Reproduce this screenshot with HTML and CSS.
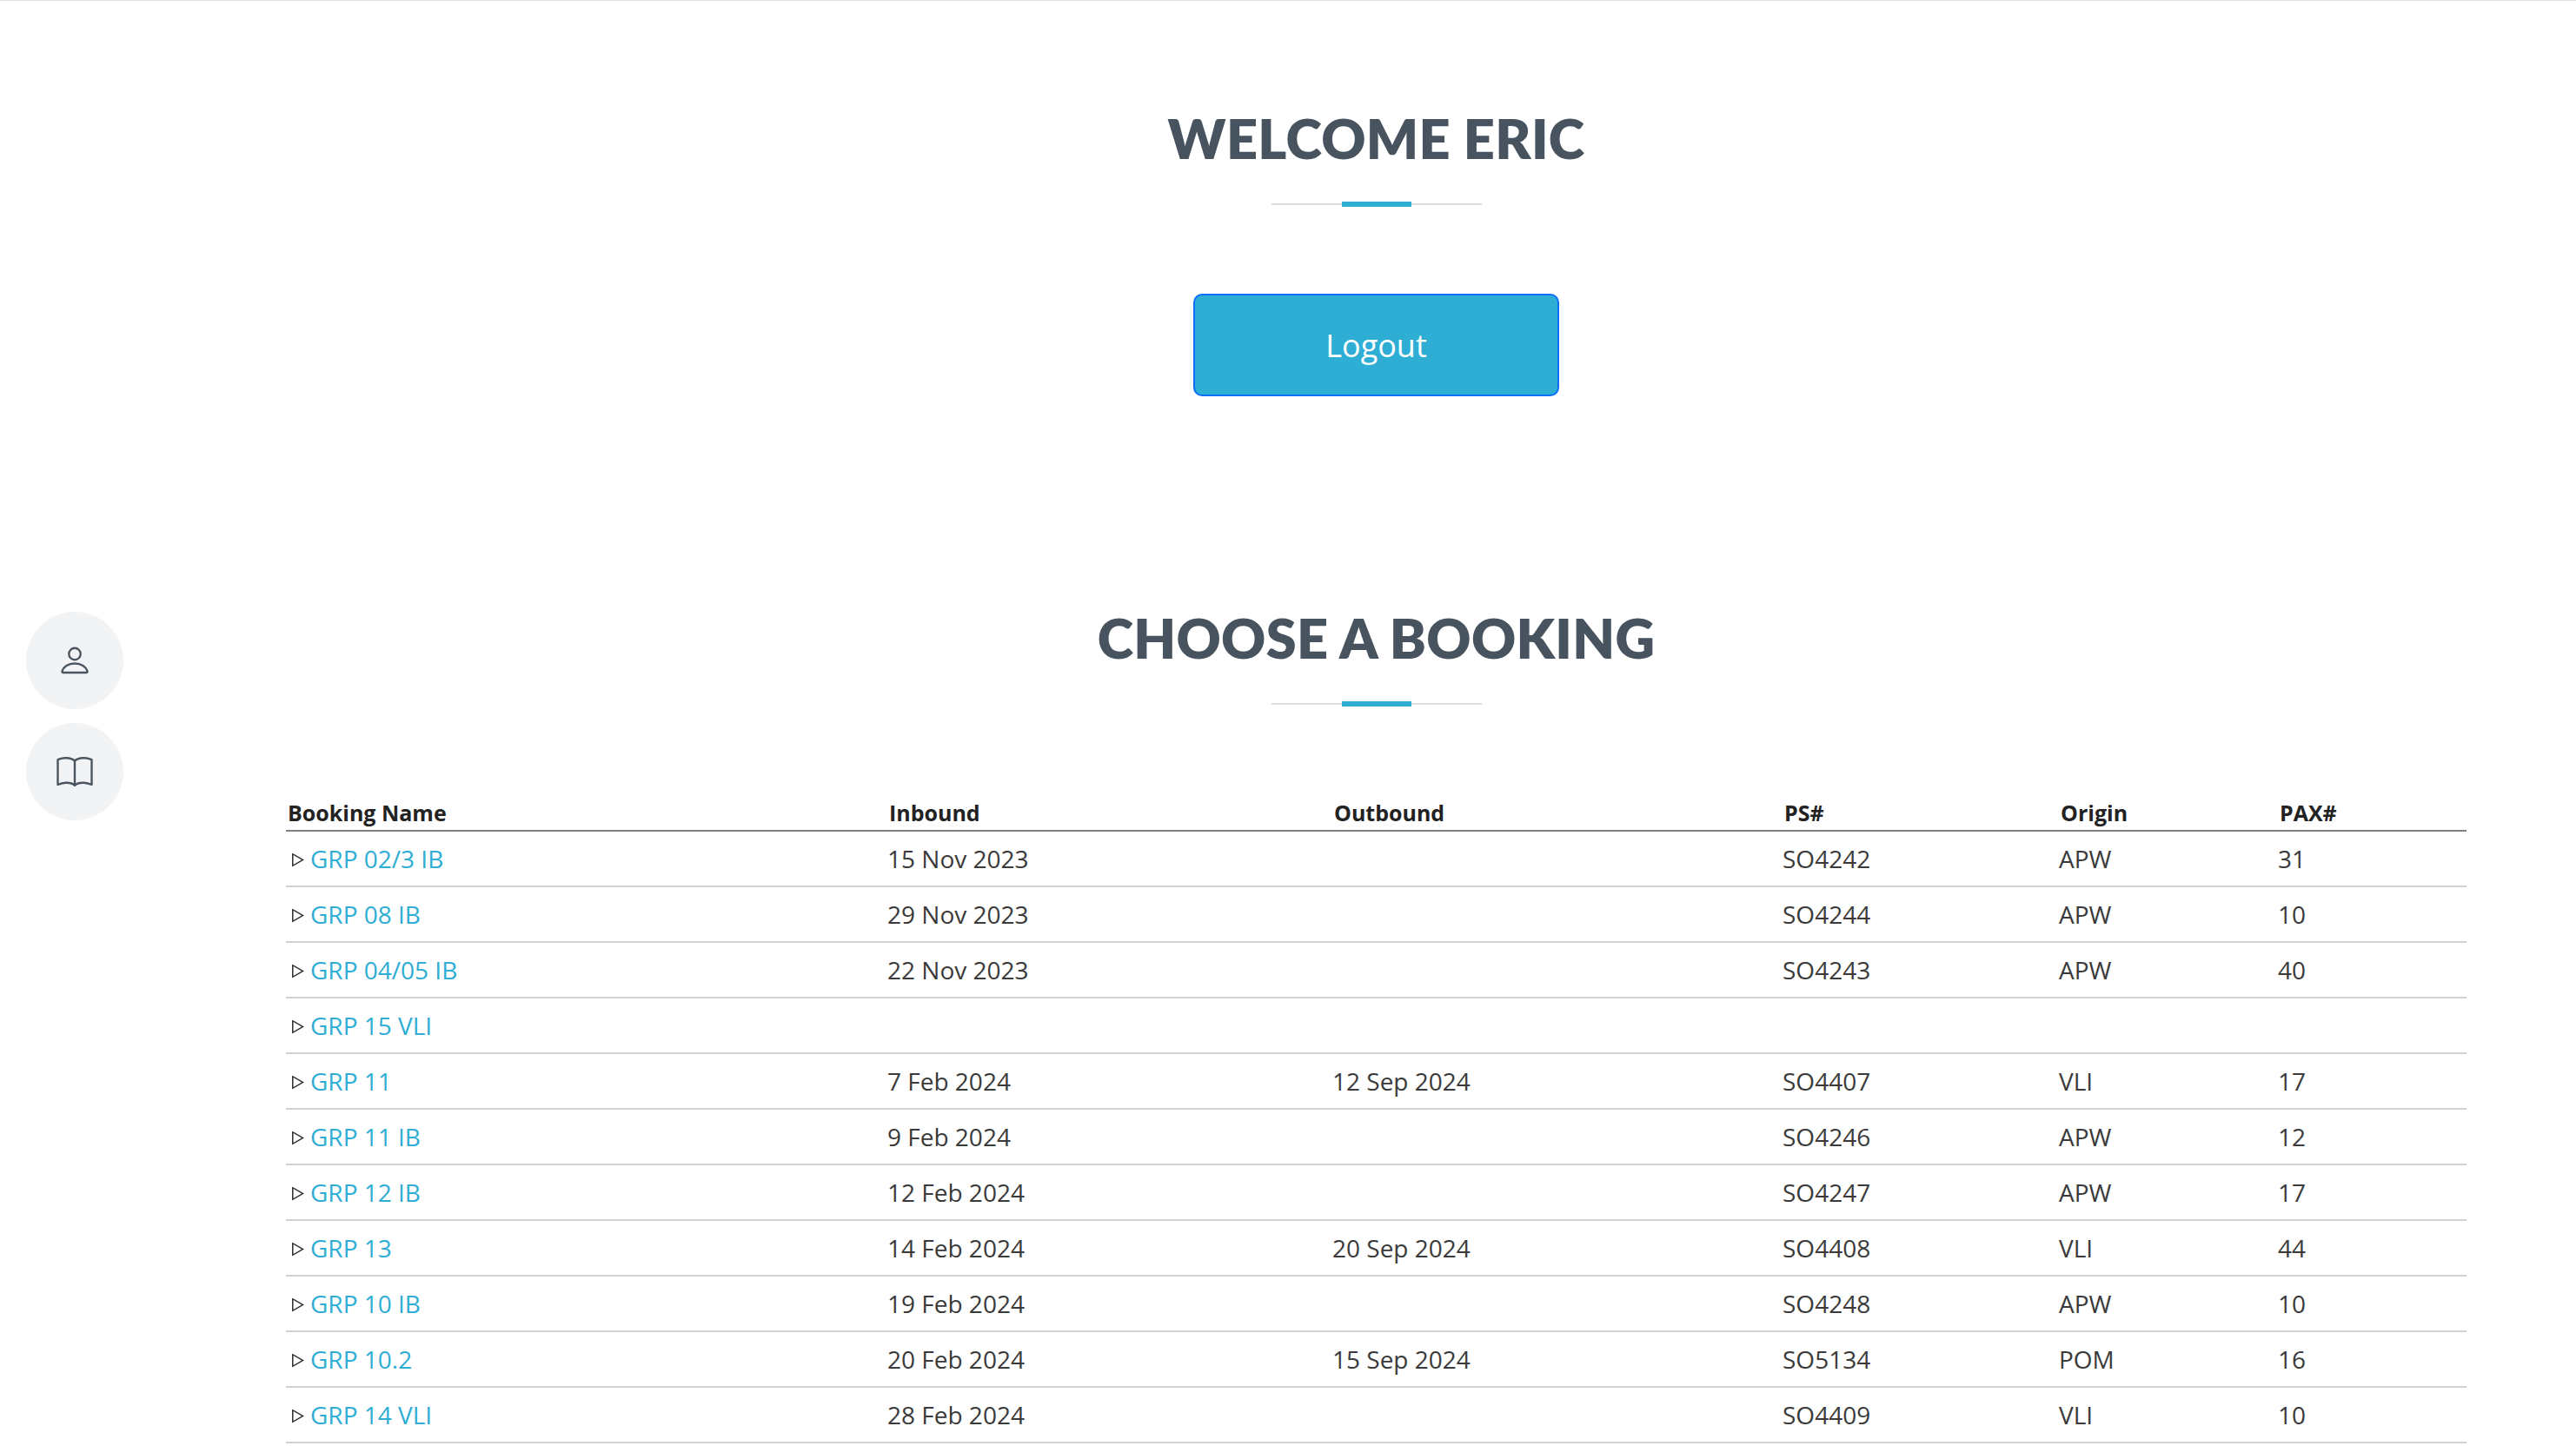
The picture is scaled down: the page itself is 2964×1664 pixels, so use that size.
FILE: index.html
```html
<!DOCTYPE html>
<html lang="en">
<head>
<meta charset="utf-8">
<title>Bookings</title>
<link rel="stylesheet" href="styles.css">
</head>
<body>
<aside class="side">
  <a class="side-btn"><svg class="ico" width="32" height="32" viewBox="0 0 32 32"><circle cx="16" cy="8.5" r="6.7"/><path d="M2.5 30c-1 0-1.200-.8-1-1.600C3 23.500 8.500 19.500 16 19.500s13 4 14.500 8.900c.2.800 0 1.600-1 1.600Z"/></svg></a>
  <a class="side-btn"><svg class="ico" width="42" height="34" viewBox="0 0 42 34"><path d="M21 4.500C18 1.800 13.500 1 9.500 1.300 6.500 1.500 3.500 2.300 1.500 3.200V32c3-1.300 6-2 9-2.200 4-.2 8 .5 10.500 3 2.500-2.500 6.500-3.200 10.500-3 3 .2 6 .9 9 2.200V3.200c-2-.9-5-1.700-8-1.900C28.500 1 24 1.800 21 4.500Zm0 0v28"/></svg></a>
</aside>
<main class="page">
  <section class="welcome">
    <h1 class="title">WELCOME ERIC</h1>
    <div class="rule"><span></span></div>
    <button class="logout">Logout</button>
  </section>
  <section class="bookings">
    <h1 class="title">CHOOSE A BOOKING</h1>
    <div class="rule"><span></span></div>
    <table class="table">
      <thead><tr><th class="c1">Booking Name</th><th class="c2">Inbound</th><th class="c3">Outbound</th><th class="c4">PS#</th><th class="c5">Origin</th><th>PAX#</th></tr></thead>
      <tbody>
        <tr><td><i class="tri"></i><a>GRP 02/3 IB</a></td><td>15 Nov 2023</td><td></td><td>SO4242</td><td>APW</td><td>31</td></tr>
        <tr><td><i class="tri"></i><a>GRP 08 IB</a></td><td>29 Nov 2023</td><td></td><td>SO4244</td><td>APW</td><td>10</td></tr>
        <tr><td><i class="tri"></i><a>GRP 04/05 IB</a></td><td>22 Nov 2023</td><td></td><td>SO4243</td><td>APW</td><td>40</td></tr>
        <tr><td><i class="tri"></i><a>GRP 15 VLI</a></td><td></td><td></td><td></td><td></td><td></td></tr>
        <tr><td><i class="tri"></i><a>GRP 11</a></td><td>7 Feb 2024</td><td>12 Sep 2024</td><td>SO4407</td><td>VLI</td><td>17</td></tr>
        <tr><td><i class="tri"></i><a>GRP 11 IB</a></td><td>9 Feb 2024</td><td></td><td>SO4246</td><td>APW</td><td>12</td></tr>
        <tr><td><i class="tri"></i><a>GRP 12 IB</a></td><td>12 Feb 2024</td><td></td><td>SO4247</td><td>APW</td><td>17</td></tr>
        <tr><td><i class="tri"></i><a>GRP 13</a></td><td>14 Feb 2024</td><td>20 Sep 2024</td><td>SO4408</td><td>VLI</td><td>44</td></tr>
        <tr><td><i class="tri"></i><a>GRP 10 IB</a></td><td>19 Feb 2024</td><td></td><td>SO4248</td><td>APW</td><td>10</td></tr>
        <tr><td><i class="tri"></i><a>GRP 10.2</a></td><td>20 Feb 2024</td><td>15 Sep 2024</td><td>SO5134</td><td>POM</td><td>16</td></tr>
        <tr><td><i class="tri"></i><a>GRP 14 VLI</a></td><td>28 Feb 2024</td><td></td><td>SO4409</td><td>VLI</td><td>10</td></tr>
      </tbody>
    </table>
  </section>
</main>
</body>
</html>
```
FILE: styles.css
```css
* { box-sizing: border-box; }
html, body { margin: 0; height: 1664px; overflow: hidden; background: #fff; }
body { font-family: "Open Sans", sans-serif; color: #333; border-top: 1px solid #e3e3e3; }
.page { padding: 0 126px 0 329px; }
.side { position: fixed; left: 30px; top: 704px; display: flex; flex-direction: column; gap: 16px; }
.side-btn { width: 112px; height: 112px; border-radius: 50%; background: #f1f3f5; display: flex; align-items: center; justify-content: center; }
.ico { fill: none; stroke: #4a5560; stroke-width: 2.4; stroke-linejoin: round; }
.welcome, .bookings { display: flex; flex-direction: column; align-items: center; }
.welcome { padding-top: 122px; height: 697px; }
.title { margin: 0; font-family: Lato, "Open Sans", sans-serif; font-weight: 800; font-size: 63px; line-height: 72px; letter-spacing: 0.3px; color: #47535f; }
.rule { position: relative; width: 242px; height: 2px; margin-top: 39px; background: #ddd; }
.rule span { position: absolute; left: 81px; top: -2px; width: 80px; height: 6px; background: #2eadd5; }
.logout { margin-top: 102px; width: 421px; height: 118px; background: #2eadd5; color: #fff; border: 2px solid #0d6efd; border-radius: 10px; font: 36px "Open Sans", sans-serif; }
.table { margin-top: 103px; width: 100%; border-collapse: collapse; table-layout: fixed; font-size: 28px; }
th { font-size: 25px; font-weight: 700; text-align: left; padding: 0 2px; height: 42px; color: #222; border-bottom: 2px solid #808080; }
td { height: 64px; padding: 0; border-bottom: 2px solid #d2d2d2; color: #3a3a3a; }
td a { color: #2eadd5; }
.c1 { width: 692px; } .c2 { width: 512px; } .c3 { width: 518px; } .c4 { width: 318px; } .c5 { width: 252px; }
.tri { display: inline-block; width: 14px; height: 16px; margin: 0 7px 4px 7px; vertical-align: middle; position: relative; background: #333; clip-path: polygon(0 0, 100% 50%, 0 100%); }
.tri::after { content: ""; position: absolute; inset: 0; background: #fff; clip-path: polygon(11% 16%, 79% 50%, 11% 84%); }
```
